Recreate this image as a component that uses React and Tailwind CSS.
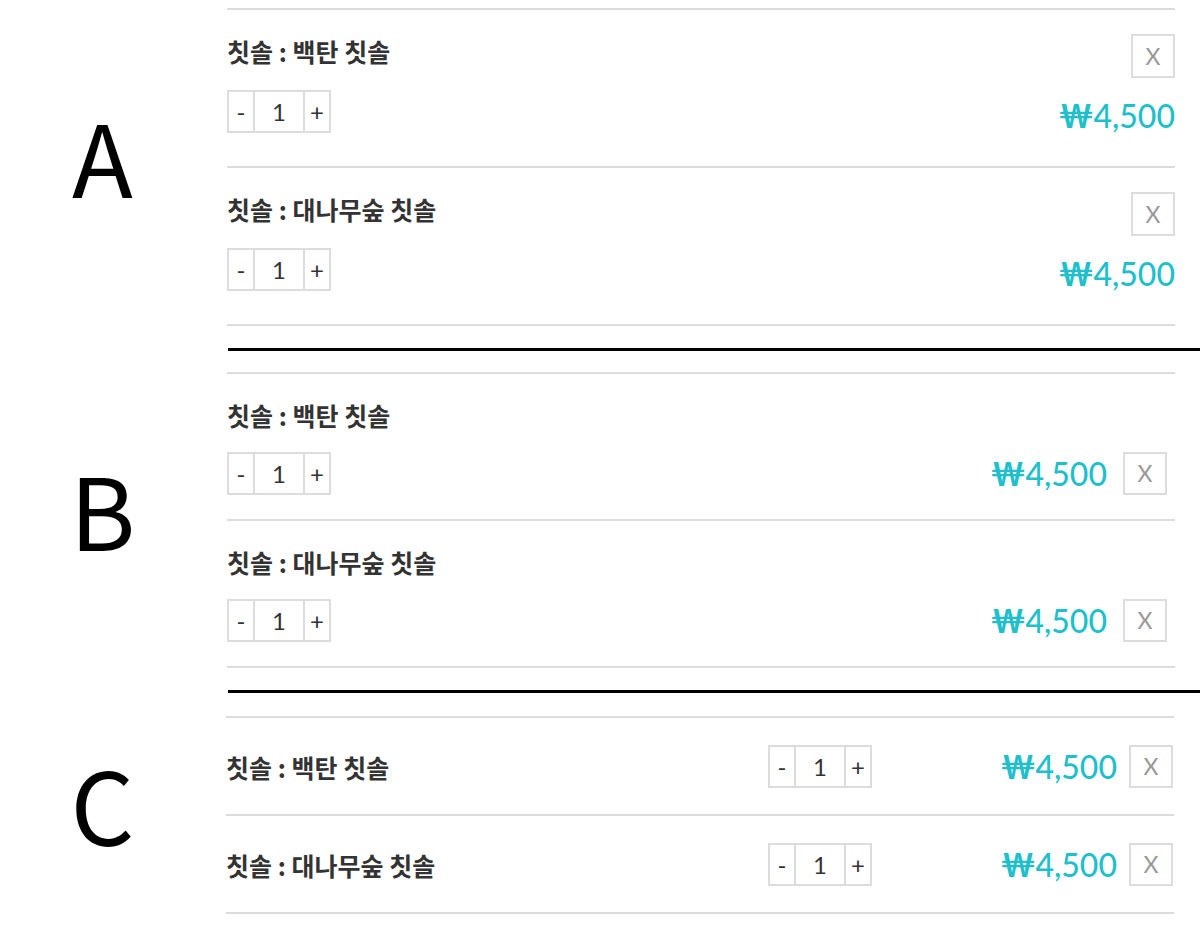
import React from 'react';

const items = [
  { id: 1, name: '칫솔 : 백탄 칫솔', qty: 1, price: '4,500' },
  { id: 2, name: '칫솔 : 대나무숲 칫솔', qty: 1, price: '4,500' },
];

const kr = "font-['Noto_Sans_CJK_KR','Noto_Sans',sans-serif]";
const lato = "font-['Lato','Noto_Sans',sans-serif]";

function Qty({ value }) {
  return (
    <div className={`flex h-[43px] w-[104px] border-2 border-[#dcdcdc] text-[24px] leading-none text-[#333] ${lato}`}>
      <button className="w-[24px] flex items-center justify-center">-</button>
      <span className="w-[52px] border-x-2 border-[#dcdcdc] flex items-center justify-center">{value}</span>
      <button className="flex-1 flex items-center justify-center">+</button>
    </div>
  );
}

function RemoveBtn({ tall }) {
  return (
    <button className={`w-[44px] ${tall ? 'h-[44px]' : 'h-[43px]'} border-2 border-[#dcdcdc] flex items-center justify-center text-[23px] text-[#999] ${lato}`}>
      X
    </button>
  );
}

function Price({ children }) {
  return (
    <span className={`text-[32px] leading-[38px] font-medium text-[#1fbfcc] ${lato}`}>
      <span className="font-bold">₩</span>{children}
    </span>
  );
}

function Title({ children }) {
  return <p className={`h-[34px] text-[25px] leading-[34px] font-bold text-[#333] whitespace-nowrap ${kr}`}>{children}</p>;
}

function Label({ children }) {
  return (
    <div className="w-[205px] pb-[25px] flex items-center justify-center">
      <span className={`text-[100px] leading-none text-black ${kr}`}>{children}</span>
    </div>
  );
}

// A: remove button top right, price under it
function LayoutA() {
  return (
    <div className="flex items-center">
      <Label>A</Label>
      <div className="ml-[22px] w-[948px] border-t-2 border-[#dcdcdc]">
        {items.map(item => (
          <div key={item.id} className="pt-[24px] pb-[33px] border-b-2 border-[#dcdcdc]">
            <div className="flex items-start justify-between h-[44px]">
              <Title>{item.name}</Title>
              <RemoveBtn tall />
            </div>
            <div className="mt-[12px] flex items-end justify-between">
              <Qty value={item.qty} />
              <div className="-mb-[2px]"><Price>{item.price}</Price></div>
            </div>
          </div>
        ))}
      </div>
    </div>
  );
}

// B: price and remove button on the quantity row
function LayoutB() {
  return (
    <div className="flex items-center">
      <Label>B</Label>
      <div className="ml-[22px] w-[948px] border-t-2 border-[#dcdcdc]">
        {items.map(item => (
          <div key={item.id} className="pt-[24px] pb-[24px] border-b-2 border-[#dcdcdc]">
            <Title>{item.name}</Title>
            <div className="mt-[20px] h-[43px] flex items-center justify-between pr-[8px]">
              <Qty value={item.qty} />
              <div className="flex items-center gap-[16px]">
                <Price>{item.price}</Price>
                <RemoveBtn />
              </div>
            </div>
          </div>
        ))}
      </div>
    </div>
  );
}

// C: single line per item
function LayoutC() {
  return (
    <div className="flex items-center">
      <Label>C</Label>
      <div className="ml-[21px] w-[948px] border-t-2 border-[#dcdcdc]">
        {items.map(item => (
          <div key={item.id} className="pt-[27px] pb-[26px] border-b-2 border-[#dcdcdc] flex items-center h-[98px]">
            <div className="flex-1"><Title>{item.name}</Title></div>
            <Qty value={item.qty} />
            <div className="w-[245px] text-right"><Price>{item.price}</Price></div>
            <div className="ml-[12px] mr-[1px]"><RemoveBtn /></div>
          </div>
        ))}
      </div>
    </div>
  );
}

export default function App() {
  return (
    <div className="w-[1200px] h-[928px] bg-white pt-[8px] overflow-hidden">
      <LayoutA />
      <div className="ml-[228px] mt-[22px] mb-[21px] h-[3px] bg-black" />
      <LayoutB />
      <div className="ml-[228px] mt-[22px] mb-[23px] h-[3px] bg-black" />
      <LayoutC />
    </div>
  );
}
